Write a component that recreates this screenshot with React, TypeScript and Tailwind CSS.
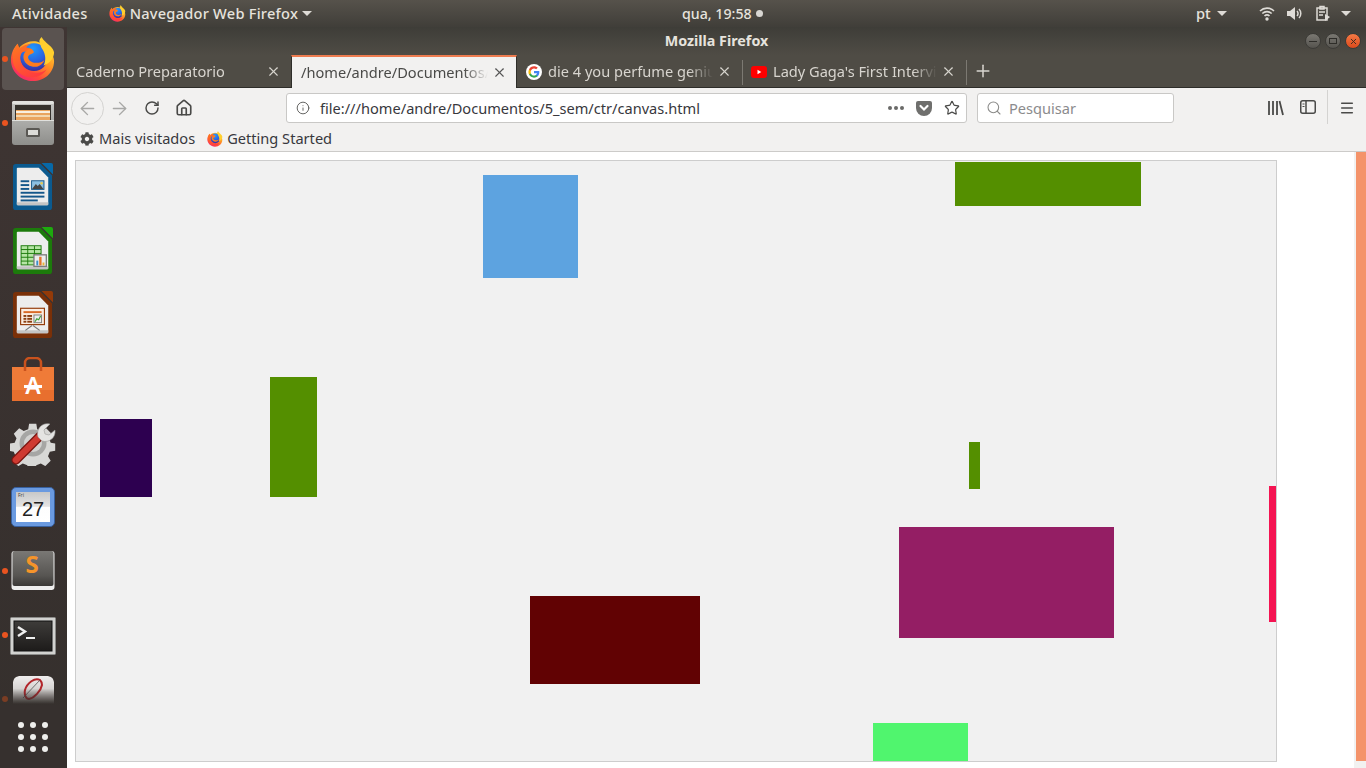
import { ArrowLeft, ArrowRight, Home, Info, Menu, Plus, RotateCw, Search, Star, X } from 'lucide-react'
import { FaCog } from 'react-icons/fa'

const font = 'font-["Noto_Sans",sans-serif]'

function Firefox({ size }: { size: number }) {
  return (
    <svg width={size} height={size} viewBox="0 0 48 48">
      <defs>
        <linearGradient id="fxBody" x1="0.8" y1="0.05" x2="0.2" y2="0.95">
          <stop offset="0" stopColor="#ffe13c" />
          <stop offset="0.4" stopColor="#ff9a24" />
          <stop offset="0.75" stopColor="#ff4a3a" />
          <stop offset="1" stopColor="#f5286e" />
        </linearGradient>
        <radialGradient id="fxGlobe" cx="0.45" cy="0.2" r="0.9">
          <stop offset="0" stopColor="#1f9bff" />
          <stop offset="0.55" stopColor="#2b5fdc" />
          <stop offset="1" stopColor="#3a1f8c" />
        </radialGradient>
        <linearGradient id="fxFox" x1="0" y1="0" x2="0.6" y2="1">
          <stop offset="0" stopColor="#ff7a1e" />
          <stop offset="1" stopColor="#ff3d3d" />
        </linearGradient>
      </defs>
      <path d="M33 1c-1 4 0 7 3 10 5 5 10 9 10 15 0 12-10 21-22 21C11 47 1 37 1 25 1 18 4 12 8 8l1 5c2-3 5-5 8-6 5-2 10-2 14 0-1-2 0-4 2-6z" fill="url(#fxBody)" />
      <circle cx="25" cy="22" r="14.5" fill="url(#fxGlobe)" />
      <path d="M33 1c-2 5-2 9 1 13 3 5 4 11 1 17 7-3 11-8 11-14-1-5-5-7-8-10-2-2-4-4-5-6z" fill="#ffcf2e" />
      <path d="M8 8c-4 5-6 11-5 18 1 9 9 17 20 17 7 0 12-3 15-8-4 3-9 4-14 3-7-1-12-6-13-12-1-4 0-7 2-9 2-1 4-1 5 0l6-2c-2-2-5-3-7-3 1-2 3-3 5-3-5-1-9 1-12 4L8 8z" fill="url(#fxFox)" />
      <path d="M21 13c3 1 4 3 4 4-2 2-5 2-6 4-1 3 3 7 8 7 4 0 7-1 9-3-2 5-7 8-12 7-5 0-10-5-10-10 0-4 3-8 7-9z" fill="#ff7b1e" />
    </svg>
  )
}

function Files() {
  return (
    <svg width="42" height="44" viewBox="0 0 42 44">
      <defs>
        <linearGradient id="cab" x1="0" y1="0" x2="0" y2="1">
          <stop offset="0" stopColor="#c6c6c3" />
          <stop offset="1" stopColor="#8e8e8b" />
        </linearGradient>
      </defs>
      <rect x="0" y="0" width="42" height="44" rx="3" fill="url(#cab)" />
      <rect x="0" y="0" width="42" height="3" rx="1.5" fill="#e2e2df" />
      <rect x="3" y="4" width="36" height="15" fill="#35312c" />
      <rect x="4" y="9" width="34" height="10" fill="#e9a45f" />
      <rect x="4" y="10" width="34" height="2" fill="#f8efe0" />
      <rect x="4" y="14" width="34" height="2" fill="#f2d7b0" />
      <rect x="0" y="19" width="42" height="1" fill="#e0e0dd" />
      <rect x="14" y="27" width="14" height="9" rx="1.5" fill="#5a5854" />
      <rect x="16" y="29" width="10" height="5" fill="#dcdcd8" />
    </svg>
  )
}

function Office({ dark, mid, children }: { dark: string; mid: string; children: React.ReactNode }) {
  return (
    <svg width="40" height="48" viewBox="0 0 42 50" preserveAspectRatio="none">
      <path d="M3 1h26l12 12v33a3 3 0 0 1-3 3H3a3 3 0 0 1-3-3V4a3 3 0 0 1 3-3z" fill={dark} />
      <path d="M30 0h10a2 2 0 0 1 2 2v10z" fill={mid} />
      <path d="M5 5h22l10 10v28a1 1 0 0 1-1 1H5a1 1 0 0 1-1-1V6a1 1 0 0 1 1-1z" fill="#ededed" />
      <path d="M4 41h33v2a1 1 0 0 1-1 1H5a1 1 0 0 1-1-1z" fill="#c4c4c4" />
      {children}
    </svg>
  )
}

function Writer() {
  return (
    <Office dark="#0b5a8f" mid="#0769a8">
      <g fill="#14578a">
        <rect x="8" y="18" width="9" height="2" />
        <rect x="8" y="22" width="9" height="2" />
        <rect x="8" y="26" width="9" height="2" />
        <rect x="8" y="30" width="25" height="2" />
        <rect x="8" y="34" width="25" height="2" />
        <rect x="8" y="38" width="18" height="2" />
      </g>
      <rect x="19" y="18" width="14" height="10" fill="#14578a" />
      <rect x="20" y="19" width="12" height="8" fill="#8cc0e2" />
      <path d="M20 27l4-5 2 2 2-2 4 5z" fill="#444" />
      <circle cx="30" cy="21" r="1.3" fill="#eac94e" />
    </Office>
  )
}

function Calc() {
  return (
    <Office dark="#1c7a0b" mid="#1dab0e">
      <rect x="8" y="19" width="22" height="21" fill="#1c7a0b" />
      <g fill="#b6e5a5">
        {[20, 24, 28, 32, 36].map(y =>
          [9, 16, 23].map(x => <rect key={`${x}-${y}`} x={x} y={y} width="6" height="3" />)
        )}
      </g>
      <rect x="22" y="29" width="13" height="12" fill="#ededed" stroke="#7d7d7d" strokeWidth="1.4" />
      <rect x="24.5" y="35" width="2" height="5" fill="#3b8ec9" />
      <rect x="27.5" y="31" width="2.5" height="9" fill="#e3752a" />
      <rect x="31" y="37" width="2" height="3" fill="#e9b53a" />
    </Office>
  )
}

function Impress() {
  return (
    <Office dark="#7a3008" mid="#943a08">
      <rect x="8" y="18" width="25" height="17" fill="#fbeee2" stroke="#943a08" strokeWidth="1.2" />
      <rect x="11" y="21" width="19" height="2" fill="#d96a26" />
      <g fill="#8a3f12">
        <rect x="11" y="25" width="3" height="2" />
        <rect x="15" y="25" width="5" height="2" />
        <rect x="11" y="28" width="3" height="2" />
        <rect x="15" y="28" width="5" height="2" />
        <rect x="11" y="31" width="3" height="2" />
        <rect x="15" y="31" width="5" height="2" />
      </g>
      <rect x="22" y="25" width="8" height="8" fill="#ededed" stroke="#7d7d7d" />
      <path d="M23 32l2-3 2 1 2-4" stroke="#3da035" strokeWidth="1.2" fill="none" />
      <path d="M20 36l-7 5M21 36l7 5" stroke="#777" strokeWidth="1.2" />
    </Office>
  )
}

function Software() {
  return (
    <svg width="42" height="44" viewBox="0 0 42 44">
      <path d="M0 10h42v34H0z" fill="#ef7b38" />
      <path d="M0 33h42v11H0z" fill="#e86f2e" />
      <path d="M13 14V6a5 5 0 0 1 5-5h6a5 5 0 0 1 5 5v8" fill="none" stroke="#c9521d" strokeWidth="2.500" />
      <text x="21" y="37" textAnchor="middle" fontSize="23" fontWeight="600" fill="#fff" fontFamily="Noto Sans, sans-serif">A</text>
      <rect x="12" y="28" width="18" height="3" fill="#fff" />
    </svg>
  )
}

function SystemSettings() {
  return (
    <svg width="46" height="46" viewBox="0 0 46 46">
      <path d="M19 2h8l1 6 5 2 5-3 6 6-3 5 2 5 5 1v8l-6 1-2 5 3 5-6 6-5-3-5 2-1 5h-8l-1-5-5-2-5 3-6-6 3-5-2-5-5-1v-8l6-1 2-5-3-5 6-6 5 3 5-2z" fill="#d8d8d6" transform="translate(2 2) scale(.9)" />
      <circle cx="23" cy="23" r="13.500" fill="#a6a6a4" />
      <circle cx="23" cy="23" r="9" fill="#d2d2d0" />
      <path d="M6 40L30 16" stroke="#7b1510" strokeWidth="9" strokeLinecap="round" />
      <path d="M6 40L30 16" stroke="#cf3a31" strokeWidth="6.500" strokeLinecap="round" />
      <path d="M28 17c-2-7 3-15 12-13l-6 6 1 4 4 1 6-5c1 8-6 13-13 11z" fill="#e4e4e2" stroke="#9a9a98" strokeWidth="0.600" />
    </svg>
  )
}

function Calendar() {
  return (
    <div className="w-[44px] h-[40px] rounded-[5px] bg-[#6a9ae0] border border-[#37609f] p-[4px] flex">
      <div className="flex-1 bg-[linear-gradient(#c8c8c8_0,#e4e4e4_48%,#fdfdfd_50%,#ffffff_100%)] flex items-center justify-center relative">
        <span className="text-[20px] leading-none font-['Liberation_Sans',sans-serif] text-[#222] mt-[3px]">27</span>
        <span className="absolute left-[2px] top-0 text-[5px] leading-[7px] text-[#444]">Fri</span>
      </div>
    </div>
  )
}

function Sublime() {
  return (
    <svg width="44" height="40" viewBox="0 0 44 40" className="overflow-visible">
      <defs>
        <linearGradient id="subl" x1="0" y1="0" x2="0" y2="1">
          <stop offset="0" stopColor="#7a7875" />
          <stop offset="0.7" stopColor="#575552" />
          <stop offset="1" stopColor="#3a3836" />
        </linearGradient>
      </defs>
      <rect x="0.5" y="0" width="43" height="39" rx="3" fill="#eeeeee" />
      <rect x="1.500" y="0" width="41" height="35" rx="2" fill="url(#subl)" />
      <text x="21" y="22" textAnchor="middle" fontSize="24" fontWeight="700" fill="#f5942a" fontFamily="Noto Sans, sans-serif">S</text>
    </svg>
  )
}

function Terminal() {
  return (
    <svg width="46" height="38" viewBox="0 0 46 38" className="mt-[2px]">
      <defs>
        <linearGradient id="term" x1="0" y1="0" x2="0" y2="1">
          <stop offset="0" stopColor="#3e3c3a" />
          <stop offset="1" stopColor="#1d1b1a" />
        </linearGradient>
      </defs>
      <rect x="0.5" y="0.5" width="45" height="37" rx="1" fill="#d2d2d0" stroke="#8c8c8a" />
      <rect x="4" y="4" width="38" height="30" fill="url(#term)" stroke="#111" />
      <path d="M8 10l7 4.500-7 4.500" fill="none" stroke="#efefef" strokeWidth="2.400" />
      <rect x="16" y="20" width="9" height="2" fill="#efefef" />
    </svg>
  )
}

function Rhythm() {
  return (
    <div className="w-[41px] h-[28px] rounded-t-[6px] bg-[linear-gradient(#f0eeee,#b8b4b2)] flex items-center justify-center overflow-hidden mt-[-18px] [mask-image:linear-gradient(#000_45%,transparent_100%)]">
      <svg width="26" height="26" viewBox="0 0 26 26">
        <path d="M20 3c-5-3-13 3-15 10-1 5 1 9 4 9 5-1 12-8 13-14 0-2-1-4-2-5z" fill="none" stroke="#b2252b" strokeWidth="2" />
        <path d="M3 21L20 3" stroke="#555" strokeWidth="0.8" />
      </svg>
    </div>
  )
}

function Dock() {
  const icons = [
    { el: <Firefox size={46} />, dot: true, active: true },
    { el: <Files />, dot: true },
    { el: <Writer /> },
    { el: <Calc /> },
    { el: <Impress /> },
    { el: <Software /> },
    { el: <SystemSettings /> },
    { el: <Calendar /> },
    { el: <Sublime />, dot: true },
    { el: <Terminal />, dot: true },
    { el: <Rhythm />, dot: true, faded: true },
  ]
  return (
    <aside className="relative w-[67px] shrink-0 bg-[linear-gradient(#3f3533,#38312f_60%,#35302d)] flex flex-col overflow-hidden">
      {icons.map((item, i) => (
        <div key={i} className="relative h-[64px] shrink-0 flex items-center justify-center pr-px">
          {item.active && <div className="absolute left-[2px] right-[3px] top-[1px] h-[62px] rounded-[4px] bg-[#5a5350]" />}
          {item.dot && (
            <div className={`absolute left-[2px] top-[29px] w-[6px] h-[6px] rounded-full ${item.faded ? 'bg-[#7a3d24]' : 'bg-[#e95420]'}`} />
          )}
          <div className="relative flex">{item.el}</div>
        </div>
      ))}
      <div className="absolute left-0 right-0 bottom-0 h-[63px] bg-[#36302e] flex items-start justify-center pt-[17px] pr-px">
        <div className="grid grid-cols-3 gap-x-[6px] gap-y-[6px]">
          {Array.from({ length: 9 }).map((_, i) => (
            <div key={i} className="w-[6px] h-[6px] rounded-full bg-[#eeeeec]" />
          ))}
        </div>
      </div>
    </aside>
  )
}

function Caret({ className }: { className?: string }) {
  return <span className={`w-0 h-0 border-x-[5px] border-x-transparent border-t-[5px] border-t-[#dedbd6] ${className ?? ''}`} />
}

function TopBar() {
  return (
    <header className={`h-[27px] shrink-0 bg-[linear-gradient(#56524b,#403e39)] text-[#e6e3dd] flex items-center relative text-[14.6px] ${font}`}>
      <span className="ml-[12px] font-medium tracking-[0.3px]">Atividades</span>
      <span className="ml-[21px] flex"><Firefox size={17} /></span>
      <span className="ml-[4px] font-medium tracking-[0.24px]">Navegador Web Firefox</span>
      <Caret className="ml-[4px]" />
      <div className="absolute left-[682px] flex items-center">
        <span className="font-medium text-[14.2px]">qua, 19:58</span>
        <span className="ml-[4px] w-[7px] h-[7px] rounded-full bg-[#d8d6d2]" />
      </div>
      <span className="absolute left-[1196px] font-medium">pt</span>
      <Caret className="absolute left-[1217px]" />
      <svg className="absolute left-[1259px] top-[6px]" width="16" height="15" viewBox="0 0 16 15" fill="none" stroke="#dedbd6" strokeWidth="1.600">
        <path d="M1 5a10 10 0 0 1 14 0M3.300 7.500a6.800 6.800 0 0 1 9.400 0M5.500 10a3.600 3.600 0 0 1 5 0" />
        <circle cx="8" cy="13" r="1.700" fill="#dedbd6" stroke="none" />
      </svg>
      <svg className="absolute left-[1287px] top-[6px]" width="16" height="15" viewBox="0 0 16 15" fill="none" stroke="#dedbd6" strokeWidth="1.500">
        <path d="M0 5h3l5-4v13l-5-4H0z" fill="#dedbd6" stroke="none" />
        <path d="M10 5a3.500 3.500 0 0 1 0 5M12 3a6.500 6.500 0 0 1 0 9" />
      </svg>
      <svg className="absolute left-[1316px]" width="15" height="17" viewBox="0 0 15 17" fill="none" stroke="#dedbd6" strokeWidth="1.500">
        <path d="M1 3h10v12H1z" />
        <path d="M4 1.500h4V4H4zM3 7h6M3 10h4" />
        <path d="M9 9l5 3-5 4z" fill="#dedbd6" stroke="none" />
      </svg>
      <Caret className="absolute left-[1341px]" />
    </header>
  )
}

function TitleBar() {
  return (
    <div className="h-[28px] shrink-0 bg-[linear-gradient(#3e3d38,#4f4c45)] flex items-center relative">
      <div className={`flex-1 text-center text-[14.3px] font-bold text-[#e6e3dd] ${font}`}>Mozilla Firefox</div>
      <div className="absolute right-[5px] top-[6px] flex gap-[4px]">
        <div className="w-[16px] h-[16px] rounded-full bg-[linear-gradient(#7a7872,#55534e)] border border-[#3c3b37] flex items-center justify-center">
          <div className="w-[8px] h-px bg-[#2e2d29]" />
        </div>
        <div className="w-[16px] h-[16px] rounded-full bg-[linear-gradient(#7a7872,#55534e)] border border-[#3c3b37] flex items-center justify-center">
          <div className="w-[8px] h-[6px] border border-[#2e2d29]" />
        </div>
        <div className="w-[16px] h-[16px] rounded-full bg-[linear-gradient(#f57a45,#dc4a1c)] border border-[#3c3b37] flex items-center justify-center">
          <X size={9} strokeWidth={2.5} className="text-[#3a2a20]" />
        </div>
      </div>
    </div>
  )
}

function GoogleIcon() {
  return (
    <svg width="16" height="16" viewBox="0 0 48 48">
      <circle cx="24" cy="24" r="24" fill="#fff" />
      <path d="M40 24.500c0-1.200-.1-2.300-.3-3.400H24v6.500h9c-.4 2.100-1.600 3.900-3.300 5v4.200h5.400c3.100-2.900 4.900-7.100 4.900-12.300z" fill="#4285f4" />
      <path d="M24 41c4.500 0 8.300-1.500 11-4l-5.400-4.200c-1.500 1-3.400 1.600-5.600 1.600-4.300 0-8-2.900-9.300-6.900H9.100v4.300C11.900 37.200 17.500 41 24 41z" fill="#34a853" />
      <path d="M14.700 27.500c-.7-2-.7-4.900 0-7v-4.300H9.100c-2.300 4.600-2.300 11 0 15.600z" fill="#fbbc05" />
      <path d="M24 13.600c2.500 0 4.700.9 6.400 2.500l4.800-4.800C32.300 8.600 28.500 7 24 7c-6.500 0-12.100 3.800-14.900 9.200l5.600 4.300c1.300-4 5-6.900 9.300-6.900z" fill="#ea4335" />
    </svg>
  )
}

function YoutubeIcon() {
  return (
    <svg width="16" height="12" viewBox="0 0 16 12">
      <rect width="16" height="12" rx="3" fill="#ff0000" />
      <path d="M6.500 3.800l3.800 2.200-3.800 2.200z" fill="#fff" />
    </svg>
  )
}

function Tab({ title, icon, active, width, sep }: { title: string; icon?: React.ReactNode; active?: boolean; width: string; sep?: boolean }) {
  return (
    <div className={`relative shrink-0 flex items-center ${width} ${active ? 'h-[33px] bg-[#f2f1f0] text-[#4a4a48] border-t-2 border-t-[#ee7c50] border-x border-x-[#2e2d29] pl-[9px] pr-[9px] z-10' : 'h-full text-[#d8d5cf] pl-[9px] pr-[10px] pt-[1px]'}`}>
      {icon && <span className="w-[16px] mr-[6px] flex justify-center shrink-0">{icon}</span>}
      <span className="flex-1 overflow-hidden whitespace-nowrap text-[14.6px] mt-[1px] [mask-image:linear-gradient(to_left,transparent,#000_24px)]">{title}</span>
      <X size={15} strokeWidth={1.8} className={`shrink-0 ml-[4px] ${active ? 'text-[#555]' : 'text-[#d8d5cf]'}`} />
      {sep && <div className="absolute right-[-1px] top-[5px] h-[25px] w-px bg-[#7c7972]" />}
    </div>
  )
}

function Tabs() {
  return (
    <div className={`h-[33px] shrink-0 bg-[#4f4c45] border-b border-[#2e2d29] flex items-start ${font}`}>
      <Tab title="Caderno Preparatorio" width="w-[224px]" />
      <Tab title="/home/andre/Documentos/" width="w-[226px]" active />
      <Tab title="die 4 you perfume genius" icon={<GoogleIcon />} width="w-[225px]" sep />
      <Tab title="Lady Gaga's First Interview" icon={<YoutubeIcon />} width="w-[224px]" sep />
      <Plus size={20} strokeWidth={1.8} className="ml-[7px] mt-[6px] text-[#d8d5cf]" />
    </div>
  )
}

function Toolbar() {
  return (
    <div className={`h-[40px] shrink-0 bg-[#f2f1f0] flex items-center relative text-[14.6px] ${font}`}>
      <div className="ml-[4px] w-[33px] h-[33px] rounded-full border border-[#d4d3d1] flex items-center justify-center">
        <ArrowLeft size={21} strokeWidth={1.6} className="text-[#a8a8a6]" />
      </div>
      <ArrowRight size={21} strokeWidth={1.6} className="ml-[5px] text-[#a8a8a6]" />
      <RotateCw size={16} strokeWidth={2.2} className="ml-[14px] text-[#4a4a48]" />
      <Home size={18} strokeWidth={2.2} className="ml-[15px] text-[#4a4a48]" />
      <div className="ml-[93px] w-[681px] h-[30px] bg-white border border-[#c9c8c6] rounded-[3px] flex items-center">
        <Info size={14} strokeWidth={1.6} className="ml-[9px] text-[#5a5a58]" />
        <span className="ml-[10px] mt-[1px] flex-1 text-[#38383d]">file:///home/andre/Documentos/5_sem/ctr/canvas.html</span>
        <div className="flex gap-[2px]">
          <span className="w-[4px] h-[4px] rounded-full bg-[#6a6a68]" />
          <span className="w-[4px] h-[4px] rounded-full bg-[#6a6a68]" />
          <span className="w-[4px] h-[4px] rounded-full bg-[#6a6a68]" />
        </div>
        <svg className="ml-[12px]" width="16" height="15" viewBox="0 0 16 15">
          <path d="M2 0h12a2 2 0 0 1 2 2v5a8 8 0 0 1-16 0V2a2 2 0 0 1 2-2z" fill="#6f6f6d" />
          <path d="M4.500 5L8 8.500 11.500 5" fill="none" stroke="#fff" strokeWidth="2.200" strokeLinecap="round" />
        </svg>
        <Star size={16} strokeWidth={1.8} className="ml-[12px] mr-[6px] text-[#4a4a48]" />
      </div>
      <div className="ml-[10px] w-[197px] h-[30px] bg-white border border-[#c9c8c6] rounded-[3px] flex items-center">
        <Search size={16} strokeWidth={1.6} className="ml-[8px] text-[#8a8a88]" />
        <span className="ml-[7px] mt-[1px] text-[#8b8b8d]">Pesquisar</span>
      </div>
      <svg className="absolute left-[1201px] top-[12px]" width="16" height="16" viewBox="0 0 16 16" fill="none" stroke="#4a4a48" strokeWidth="1.800">
        <path d="M1 1v14M5 1v14M9 1v14M11.500 1L15 15" />
      </svg>
      <svg className="absolute left-[1233px] top-[12px]" width="16" height="14" viewBox="0 0 16 14" fill="none" stroke="#4a4a48" strokeWidth="1.500">
        <rect x="0.750" y="0.750" width="14.500" height="12.500" rx="2" />
        <path d="M6 1v12" strokeWidth="1.500" />
        <path d="M2.500 4h2M2.500 6.500h2" strokeWidth="1" />
      </svg>
      <div className="absolute left-[1260px] top-[2px] h-[34px] w-px bg-[#d4d3d1]" />
      <Menu size={16} strokeWidth={2.200} className="absolute left-[1272px] top-[12px] text-[#4a4a48]" />
    </div>
  )
}

function Bookmarks() {
  return (
    <div className={`h-[24px] shrink-0 bg-[#f2f1f0] border-b border-[#cccbc9] flex items-center text-[14.6px] text-[#38383d] pb-[2px] ${font}`}>
      <FaCog size={14} className="ml-[13px] text-[#4a4a48]" />
      <span className="ml-[5px]">Mais visitados</span>
      <span className="ml-[12px] flex"><Firefox size={16} /></span>
      <span className="ml-[4px]">Getting Started</span>
    </div>
  )
}

// posicoes absolutas na pagina, descontado o canto do canvas em (76,161)
const shapes = [
  { x: 483, y: 175, w: 95, h: 103, color: '#5da3e0' },
  { x: 955, y: 162, w: 186, h: 44, color: '#548f00' },
  { x: 100, y: 419, w: 52, h: 78, color: '#2d0050' },
  { x: 270, y: 377, w: 47, h: 120, color: '#548f00' },
  { x: 969, y: 442, w: 11, h: 47, color: '#548f00' },
  { x: 899, y: 527, w: 215, h: 111, color: '#941e64' },
  { x: 1269, y: 486, w: 7, h: 136, color: '#f41452' },
  { x: 530, y: 596, w: 170, h: 88, color: '#610203' },
  { x: 873, y: 723, w: 95, h: 38, color: '#50f56e' },
]

function Canvas() {
  return (
    <div className="relative flex-1 bg-white p-2 overflow-hidden">
      <div className="relative w-[1202px] h-[602px] bg-[#f1f1f1] border border-[#cdcdcd]">
        {shapes.map((s, i) => (
          <div
            key={i}
            className="absolute"
            style={{ left: s.x - 76, top: s.y - 161, width: s.w, height: s.h, backgroundColor: s.color }}
          />
        ))}
      </div>
      <div className="absolute right-0 top-0 bottom-0 w-[12px] bg-[#f2f1f0]">
        <div className="absolute right-0 top-0 w-[10px] h-[609px] bg-[#f4936a]" />
      </div>
    </div>
  )
}

export default function App() {
  return (
    <div className="w-[1366px] h-[768px] overflow-hidden flex flex-col">
      <TopBar />
      <div className="flex-1 flex min-h-0">
        <Dock />
        <div className="flex-1 flex flex-col min-w-0">
          <TitleBar />
          <Tabs />
          <Toolbar />
          <Bookmarks />
          <Canvas />
        </div>
      </div>
    </div>
  )
}
